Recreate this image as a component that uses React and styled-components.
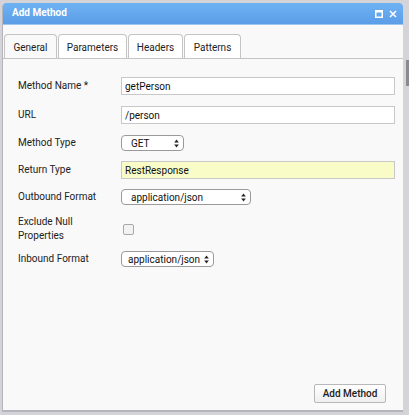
import React from "react";
import styled, { createGlobalStyle } from "styled-components";

const Global = createGlobalStyle`
  html, body { margin: 0; padding: 0; }
  body { font-family: Roboto, "Liberation Sans", Arial, sans-serif; }
`;

const Page = styled.div`
  width: 409px;
  height: 415px;
  box-sizing: border-box;
  background: #d4d4d8;
  padding: 3px 6px 3px 2px;
  display: flex;
  position: relative;
  overflow: hidden;
`;

const Backdrop = styled.div`
  position: absolute;
  right: 0;
  top: 60px;
  width: 3px;
  height: 26px;
  background: #8a8a90;
`;

const Dialog = styled.div`
  flex: 1;
  display: flex;
  flex-direction: column;
  border-radius: 4px 4px 0 0;
  border-bottom: 2px solid #b4b4bc;
  border-left: 1px solid #b4b4bc;
  overflow: hidden;
  background: #f9f9f9;
`;

const TitleBar = styled.div`
  height: 21px;
  flex: none;
  display: flex;
  align-items: center;
  padding: 0 6px 0 9px;
  background: linear-gradient(#6fb2f3, #5b9de7);
  border-bottom: 1px solid #9cc6f0;
  color: #fff;
`;

const Title = styled.div`
  flex: 1;
  font-size: 10px;
  font-weight: 700;
  margin-top: -2px;
`;

const TitleIcons = styled.div`
  display: flex;
  gap: 6px;
  align-items: center;
`;

const Body = styled.div`
  flex: 1;
  display: flex;
  flex-direction: column;
  padding-top: 9px;
`;

const Tabs = styled.div`
  display: flex;
  padding-left: 1px;
  border-bottom: 1px solid #c4c4c4;
  height: 24px;
  box-sizing: content-box;
`;

const Tab = styled.div`
  width: ${(p) => p.w}px;
  box-sizing: border-box;
  margin-right: 1px;
  border: 1px solid #c4c4c4;
  border-bottom: none;
  border-radius: 4px 4px 0 0;
  background: ${(p) => (p.active ? "#f9f9f9" : "#ffffff")};
  font-size: 10px;
  color: #222;
  display: flex;
  align-items: center;
  justify-content: center;
  padding-top: 1px;
`;

const Form = styled.div`
  padding: 13px 0 0 15px;
  display: flex;
  flex-direction: column;
`;

const Row = styled.div`
  height: ${(p) => p.h}px;
  display: flex;
  align-items: center;
`;

const Label = styled.div`
  width: 103px;
  font-size: 10px;
  line-height: 14px;
  color: #222;
`;

const TextInput = styled.div`
  width: 274px;
  height: 18px;
  box-sizing: border-box;
  border: 1px solid #c8c8c8;
  background: ${(p) => (p.highlight ? "#fafcc8" : "#ffffff")};
  font-size: 10px;
  color: #111;
  display: flex;
  align-items: center;
  padding-left: 3px;
`;

const Select = styled.div`
  width: ${(p) => p.w}px;
  height: 16px;
  box-sizing: border-box;
  border: 1px solid #9a9a9a;
  border-radius: 4px;
  background: #fff;
  font-size: 10px;
  color: #111;
  display: flex;
  align-items: center;
  justify-content: space-between;
  padding: 0 4px 0 ${(p) => p.pl}px;
`;

const Checkbox = styled.div`
  width: 11px;
  height: 11px;
  margin-left: 2px;
  box-sizing: border-box;
  border: 1px solid #a8a8a8;
  border-radius: 2px;
  background: #f2f2f2;
`;

const Footer = styled.div`
  margin-top: auto;
  display: flex;
  justify-content: flex-end;
  padding: 0 17px 7px 0;
`;

const Button = styled.div`
  width: 72px;
  height: 19px;
  box-sizing: border-box;
  border: 1px solid #b8b8b8;
  border-radius: 2px;
  background: linear-gradient(#ffffff, #efefef);
  font-size: 10px;
  font-weight: 500;
  color: #222;
  display: flex;
  align-items: center;
  justify-content: center;
`;

const Arrows = () => (
  <svg width="5" height="9" viewBox="0 0 5 9">
    <path d="M2.5 0.5 L4.8 3.6 L0.2 3.6 Z" fill="#222" />
    <path d="M2.5 8.5 L4.8 5.4 L0.2 5.4 Z" fill="#222" />
  </svg>
);

export default function App() {
  return (
    <>
      <Global />
      <Page>
        <Backdrop />
        <Dialog>
          <TitleBar>
            <Title>Add Method</Title>
            <TitleIcons>
              <svg width="8" height="8" viewBox="0 0 8 8">
                <rect x="0.75" y="0.75" width="6.5" height="6.5" fill="none" stroke="#fff" strokeWidth="1.5" />
                <rect x="0.5" y="0.5" width="7" height="2" fill="#fff" />
              </svg>
              <svg width="8" height="8" viewBox="0 0 8 8">
                <path d="M1 1 L7 7 M7 1 L1 7" stroke="#fff" strokeWidth="1.6" />
              </svg>
            </TitleIcons>
          </TitleBar>
          <Body>
            <Tabs>
              <Tab w={53} active>General</Tab>
              <Tab w={69}>Parameters</Tab>
              <Tab w={55}>Headers</Tab>
              <Tab w={57}>Patterns</Tab>
            </Tabs>
            <Form>
              <Row h={28}>
                <Label>Method Name *</Label>
                <TextInput>getPerson</TextInput>
              </Row>
              <Row h={30}>
                <Label>URL</Label>
                <TextInput>/person</TextInput>
              </Row>
              <Row h={26}>
                <Label>Method Type</Label>
                <Select w={63} pl={9}>
                  GET
                  <Arrows />
                </Select>
              </Row>
              <Row h={28}>
                <Label>Return Type</Label>
                <TextInput highlight>RestResponse</TextInput>
              </Row>
              <Row h={26}>
                <Label>Outbound Format</Label>
                <Select w={130} pl={9}>
                  application/json
                  <Arrows />
                </Select>
              </Row>
              <Row h={38}>
                <Label>
                  Exclude Null
                  <br />
                  Properties
                </Label>
                <Checkbox />
              </Row>
              <Row h={22}>
                <Label>Inbound Format</Label>
                <Select w={93} pl={6}>
                  application/json
                  <Arrows />
                </Select>
              </Row>
            </Form>
            <Footer>
              <Button>Add Method</Button>
            </Footer>
          </Body>
        </Dialog>
      </Page>
    </>
  );
}
